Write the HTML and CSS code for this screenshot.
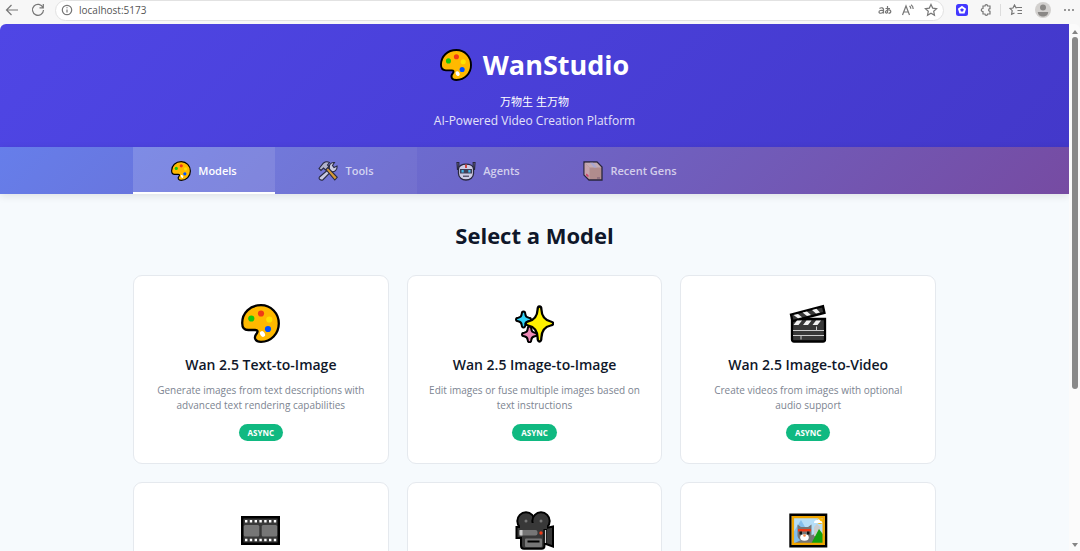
FILE: index.html
```
<!DOCTYPE html>
<html lang="en">
<head>
    <meta charset="UTF-8">
    <meta name="viewport" content="width=device-width, initial-scale=1.0">
    <title>WanStudio</title>
    <link rel="stylesheet" href="styles.css">
</head>
<body>
    <!-- shared icons -->
    <svg class="sprite" aria-hidden="true">
        <symbol id="palette" viewBox="0 0 39 39">
            <path d="M20 1.2C9 1.2 1.2 9 1.2 19c0 4.500 2 7 6 7h7c2.500 0 3 1.500 1.500 3.500-3.500 4-1.500 8.300 4.300 8.300 10 0 17.800-8 17.800-18.300S30 1.200 20 1.200Z" fill="#ffb900" stroke="#000" stroke-width="2.300"/>
            <circle cx="10.300" cy="14.500" r="3.100" fill="#16c60c"/>
            <circle cx="20" cy="9.500" r="3.100" fill="#f03a17"/>
            <circle cx="28.300" cy="15.500" r="3.100" fill="#ffe100"/>
            <circle cx="27" cy="25" r="3.100" fill="#0050ff"/>
            <ellipse cx="21.500" cy="30" rx="2.300" ry="3" transform="rotate(-35 21.500 30)" fill="#fff"/>
        </symbol>
    </svg>

    <div class="browser">
        <div class="toolbar">
            <button class="tool" aria-label="Back"><svg width="14" height="14" viewBox="0 0 14 14"><path d="M13 7H1.500M6.500 2l-5 5 5 5"/></svg></button>
            <button class="tool" aria-label="Reload"><svg width="14" height="14" viewBox="0 0 14 14"><path d="M12 4.500A5.500 5.500 0 1 0 12.500 7M12.300 1v3.800H8.500"/></svg></button>
            <div class="address">
                <svg width="12" height="12" viewBox="0 0 12 12"><circle cx="6" cy="6" r="4.700"/><path d="M6 5.500v3M6 3.300v1"/></svg>
                <input type="text" value="localhost:5173" aria-label="Address">
                <button class="tool" aria-label="Translate"><svg width="14" height="12" viewBox="0 0 14 12"><path d="M1.500 4.500c2-1.500 4-.5 4 1V9.500M5.500 6.500C3 6 1 6.500 1 8c0 2 3.500 1.500 4.500-.5M7.500 4.500h4.500M9.500 2v6.500c-1 1-2.300.5-2-.8C8 6 12.500 5 12.800 7.300c0 1.700-1.300 2-2.300 2"/></svg></button>
                <button class="tool" aria-label="Read aloud"><svg width="14" height="12" viewBox="0 0 14 12"><path d="M1.500 11 5 2l3.500 9M2.700 8h4.600M8.500 2c1 .7 1.300 1.500 1.300 2.700M10 .8c1.700 1 2.200 2.500 2.200 4.200"/></svg></button>
                <button class="tool" aria-label="Add to favorites"><svg width="14" height="14" viewBox="0 0 14 14"><path d="m7 1.500 1.700 3.600 3.900.5L9.700 8.300l.8 4L7 10.300l-3.500 2 .8-4-2.900-2.700 3.900-.5Z"/></svg></button>
            </div>
            <button class="tool" aria-label="Extension"><svg width="12" height="12" viewBox="0 0 12 12"><rect width="12" height="12" rx="2.500" class="badge-bg"/><path class="badge-mark" d="m6 3 2.900 2.100-1.100 3.400H4.200L3.100 5.100Z"/></svg></button>
            <button class="tool" aria-label="Extensions"><svg width="12" height="12" viewBox="0 0 12 12"><path d="M3 2h2c0-1.800 2.600-1.800 2.600 0H10v2.600c-1.800 0-1.800 2.800 0 2.800V10H7.600c0 1.700-2.600 1.700-2.600 0H3V7.500C.7 7.500.7 4.500 3 4.500Z"/></svg></button>
            <span class="divider"></span>
            <button class="tool" aria-label="Favorites"><svg width="14" height="12" viewBox="0 0 14 12"><path d="M8.500 3.500 7 3.800 5.500 1 4 4l-3 .4L3.200 6.600l-.6 3.700L5.500 9M8.500 3.500H13M8.500 6.500H13M8.500 9.500H13"/></svg></button>
            <button class="tool" aria-label="Profile"><svg width="16" height="16" viewBox="0 0 16 16"><circle class="avatar-bg" cx="8" cy="8" r="8"/><circle class="avatar" cx="8" cy="5.500" r="3"/><path class="avatar" d="M2.800 10h10.400c0 3-2.500 4.500-5.200 4.500S2.800 13 2.800 10Z"/></svg></button>
            <button class="tool" aria-label="More"><svg width="12" height="12" viewBox="0 0 12 12"><path class="dots" d="M2 6h0M6 6h0M10 6h0"/></svg></button>
        </div>

        <div class="viewport">
            <div class="page">
                <header class="header">
                    <h1><svg class="logo"><use href="#palette"/></svg> WanStudio</h1>
                    <p class="slogan" lang="zh">万物生 生万物</p>
                    <p class="subtitle">AI-Powered Video Creation Platform</p>
                </header>

                <nav class="nav">
                    <div class="tabs">
                        <button class="tab active">
                            <svg class="tab-icon"><use href="#palette"/></svg>
                            Models
                        </button>
                        <button class="tab hover">
                            <svg class="tab-icon" viewBox="0 0 20 20">
                                <path d="m1.500 16 10-8.500c-1-3.500 1.500-6.500 5-6l-2 3 1.500 2L19 5c.5 4-2.500 6.500-6 5.500L5 18.700c-2 1.300-5-1-3.500-2.700Z" fill="#e5e5e5" stroke="#111" stroke-width="1.100"/>
                                <path d="m7.500 8 2-2 9.800 10.300-2.500 2.700Z" fill="#f7a500" stroke="#111" stroke-width="1.100"/>
                                <path d="M1 7.500 5.500 2C7.500.5 10 .7 11.500 1.500L9.500 4l1.500 1.500L7.500 9 5.500 7 3 9.500Z" fill="#c8c8c8" stroke="#111" stroke-width="1.100"/>
                            </svg>
                            Tools
                        </button>
                        <button class="tab">
                            <svg class="tab-icon" viewBox="0 0 20 20">
                                <path d="M1 1.500h1.800v7H1.500ZM17.200 1.500H19l-.5 7h-1.300Z" fill="#aaa" stroke="#111" stroke-width="1.200"/>
                                <path d="M2.500 8c0-6.500 15-6.500 15 0v4.500c0 4-3.500 6.500-7.500 6.500s-7.500-2.500-7.500-6.500Z" fill="#eee" stroke="#111" stroke-width="1.300"/>
                                <path d="M9 3.500h2V7H9Z" fill="#f03a17"/>
                                <path d="M4 8h12v4.500H4Z" fill="#333"/>
                                <path d="M5.500 9h2.200v2.500H5.500ZM12.300 9h2.200v2.500h-2.200Z" fill="#31d2f7"/>
                                <path d="M7 14.500h6v1.500H7Z" fill="#555"/>
                            </svg>
                            Agents
                        </button>
                        <button class="tab">
                            <svg class="tab-icon" viewBox="0 0 20 20">
                                <path d="M1 1h13l5 5v13H6l-5-5Z" fill="#c69a7c" stroke="#111" stroke-width="1.300"/>
                                <path d="M1.700 1.700h12l4.600 4.800H6.500Z" fill="#e0c3ae"/>
                                <path d="M1.700 2v11.700l4.800 4.500V6.500Z" fill="#e3b9a5"/>
                                <path d="M7 1.700h3l4 4.800h-3Z" fill="#bdbdd6"/>
                                <path d="M3 12.500 5.500 14v2.500L3 14.300Z" fill="#e8364f"/>
                                <path d="M14 17h3" stroke="#755" stroke-width="1"/>
                            </svg>
                            Recent Gens
                        </button>
                    </div>
                </nav>

                <main class="container">
                    <h2>Select a Model</h2>
                    <div class="grid">
                        <article class="card">
                            <svg class="icon"><use href="#palette"/></svg>
                            <h3>Wan 2.5 Text-to-Image</h3>
                            <p>Generate images from text descriptions with advanced text rendering capabilities</p>
                            <span class="badge">ASYNC</span>
                        </article>
                        <article class="card">
                            <svg class="icon" viewBox="0 0 39 39">
                                <g stroke="#000" stroke-width="2" stroke-linejoin="round">
                                    <path d="M8.500 7.500q1.700 0 1.800 2.500.2 3.200 3.500 3.700 2.200.2 2.200 1.800t-2.200 1.800q-3.300.5-3.500 3.700-.1 2.500-1.800 2.500T6.700 21q-.2-3.200-3.500-3.700Q1 17.100 1 15.500t2.200-1.800Q6.500 13.200 6.700 10q.1-2.500 1.800-2.500Z" fill="#31d2f7"/>
                                    <path d="M14.500 22.500q1.700 0 1.800 2.500.2 3.200 3.500 3.700 2.200.2 2.200 1.800t-2.200 1.800q-3.300.5-3.500 3.700-.1 2.200-1.800 2.200T12.700 36q-.2-3.200-3.500-3.700Q7 32.100 7 30.500t2.200-1.800q3.300-.5 3.500-3.700.1-2.500 1.800-2.500Z" fill="#ef8ab8"/>
                                    <path d="M24.500 2.500c1.500 0 1.900 1 1.900 3 .3 7 3.300 10.500 9.300 12 3.500.8 3.500 3.200 0 4-6 1.300-9 5-9.300 12 0 5.300-3.800 5.300-3.800 0-.3-7-3.300-10.700-9.300-12-3.500-.8-3.500-3.200 0-4 6-1.500 9-5 9.300-12 0-2 .4-3 1.900-3Z" fill="#fff100" stroke-width="2.300"/>
                                </g>
                            </svg>
                            <h3>Wan 2.5 Image-to-Image</h3>
                            <p>Edit images or fuse multiple images based on text instructions</p>
                            <span class="badge">ASYNC</span>
                        </article>
                        <article class="card">
                            <svg class="icon" viewBox="0 0 39 39">
                                <path d="M3 15h33v20.500q0 2-2 2H5q-2 0-2-2Z" fill="#383838" stroke="#000" stroke-width="2.300"/>
                                <path d="m2 10.500 32-8.300 1.500 6.600L3.500 17Z" fill="#383838" stroke="#000" stroke-width="2.300"/>
                                <path d="m4.500 11 4.500-1 4 3.300-4 1ZM13.500 8.500l4.500-1L22 11l-4 1ZM23 6l4.500-1.200L31 8.500l-4 1Z" fill="#f2f2f2"/>
                                <path d="m8 16.500h5L9.500 21h-5ZM17.500 16.500h5L19 21h-5ZM27 16.500h5L28.500 21h-5Z" fill="#f2f2f2"/>
                                <path d="M4 26.500h31M4 31.500h31M27.500 22.500v4M12 31.500v4" stroke="#ccc" stroke-width="1" fill="none"/>
                            </svg>
                            <h3>Wan 2.5 Image-to-Video</h3>
                            <p>Create videos from images with optional audio support</p>
                            <span class="badge">ASYNC</span>
                        </article>
                        <article class="card">
                            <svg class="icon" viewBox="0 0 39 39">
                                <path d="M1.200 6.200h36.600v26.600H1.200Z" fill="#383838" stroke="#000" stroke-width="2.400"/>
                                <rect x="2.800" y="14" width="15.500" height="11.500" rx="1.500" fill="#767676"/>
                                <rect x="20.700" y="14" width="15.500" height="11.500" rx="1.500" fill="#767676"/>
                                <path d="M4 10.200h32M4 29h32" stroke="#fff" stroke-width="2.600" stroke-dasharray="2.400 2.400"/>
                            </svg>
                        </article>
                        <article class="card">
                            <svg class="icon" viewBox="0 0 39 39">
                                <path d="m31 17 7-1.500v20L31 33Z" fill="#383838" stroke="#000" stroke-width="2"/>
                                <circle cx="11" cy="10" r="8.700" fill="#383838" stroke="#000" stroke-width="2"/>
                                <circle cx="26" cy="10" r="8.700" fill="#383838" stroke="#000" stroke-width="2"/>
                                <path d="M1.500 16h28v18.500q0 3.300-3 3.300H9q-3 0-3-3.300V27H1.500Z" fill="#383838" stroke="#000" stroke-width="2"/>
                                <path d="M5 12h27v6H5Z" fill="#383838"/>
                                <path d="M30.500 19v13" stroke="#ccc" stroke-width="1.300"/>
                                <rect x="4.500" y="19" width="18" height="5.500" rx="2" fill="#767676"/>
                                <path d="M4.500 19h3v5.500h-3Z" fill="#ccc"/>
                                <circle cx="26" cy="22" r="1.700" fill="#f03a17"/>
                                <circle cx="11" cy="10" r="1.500" fill="#767676"/>
                                <circle cx="26" cy="10" r="1.500" fill="#767676"/>
                                <rect x="10" y="27.500" width="17" height="8.500" rx="1" fill="#767676"/>
                                <path d="M12.500 30.500h12" stroke="#000" stroke-width="2"/>
                            </svg>
                        </article>
                        <article class="card">
                            <svg class="icon" viewBox="0 0 39 39">
                                <path d="M1.500 3.700h35.600v31.600H1.500Z" fill="#b5def7" stroke="#000" stroke-width="2.400"/>
                                <path d="m4 22 8-13 4 7 4 17H4Z" fill="#83beec"/>
                                <path d="M4 33 20 25l6-2v10Z" fill="#767676"/>
                                <path d="M25 25V16l3-3 3 3v10Z" fill="#ccc"/>
                                <path d="M22 33 30 18l6 8v7Z" fill="#13a10e"/>
                                <circle cx="31" cy="10" r="3" fill="#ffb900"/>
                                <path d="M25 12q0-3 3-3 2-2 3.500 1 2 0 2 2Z" fill="#fff"/>
                                <path d="M8.500 13.500 12 16h7l3.500-2.500V25q-1 5-7 5t-7-5Z" fill="#767676"/>
                                <path d="M9 18h13v2.500H9Z" fill="#f03a17"/>
                                <path d="M10.500 20.500h2.500v3h-2.500ZM18 20.500h2.500v3H18Z" fill="#111"/>
                                <ellipse cx="15.500" cy="26.500" rx="4.300" ry="3.300" fill="#fff"/>
                                <circle cx="15.500" cy="24.500" r="1.300" fill="#f7894a"/>
                                <path d="M3.900 6.100h30.800v26.800H3.900Z" fill="none" stroke="#f0a500" stroke-width="2.400"/>
                            </svg>
                        </article>
                    </div>
                </main>
            </div>
            <div class="scrollbar">
                <span class="arrow"></span>
                <span class="thumb"></span>
                <span class="arrow down"></span>
            </div>
        </div>
    </div>
</body>
</html>
```

FILE: styles.css
```
* {
    box-sizing: border-box;
}
body {
    margin: 0;
    font-family: "Open Sans", "Noto Sans", "Noto Sans CJK SC", sans-serif;
    color: #0f172a;
    background: #f7f7f7;
}
h1, h2, h3, p {
    margin: 0;
}
button {
    font-family: inherit;
    border: none;
    padding: 0;
    background: none;
    cursor: pointer;
}
svg {
    display: block;
    flex-shrink: 0;
}
.sprite {
    display: none;
}

/* browser frame */
.browser {
    display: flex;
    flex-direction: column;
    height: 100vh;
    overflow: hidden;
}
.toolbar {
    display: flex;
    flex-shrink: 0;
    align-items: center;
    gap: 12px;
    height: 24px;
    padding: 0 5px 4px;
}
.toolbar svg {
    fill: none;
    stroke: #777;
    stroke-width: 1.2;
}
.address {
    display: flex;
    flex: 1;
    align-items: center;
    gap: 9px;
    height: 21px;
    margin-left: -2px;
    padding: 0 5px;
    background: #fff;
    border: 1px solid #e2e2e2;
    border-radius: 11px;
}
.address input {
    flex: 1;
    min-width: 0;
    padding: 0;
    margin-left: -3px;
    border: none;
    outline: none;
    font-family: inherit;
    font-size: 10px;
    color: #555;
    background: none;
}
.toolbar .badge-bg {
    fill: #4338ff;
    stroke: none;
}
.toolbar .badge-mark {
    stroke: #fff;
    stroke-width: 2;
}
.divider {
    width: 1px;
    height: 12px;
    margin: 0 -4px;
    background: #ddd;
}
.toolbar .avatar-bg {
    fill: #d2d0ce;
    stroke: none;
}
.toolbar .avatar {
    fill: #8a8886;
    stroke: none;
}
.toolbar .dots {
    stroke-width: 2;
    stroke-linecap: round;
}
.viewport {
    display: flex;
    flex: 1;
    min-height: 0;
    border-radius: 6px 6px 0 0;
    overflow: hidden;
    background: #fbfbfb;
}
.page {
    flex: 1;
    overflow: hidden;
    background: #f6fafd;
}
.scrollbar {
    display: flex;
    flex-direction: column;
    align-items: center;
    width: 11px;
    padding: 6px 0 4px;
}
.arrow {
    border: 3px solid transparent;
    border-top: none;
    border-bottom: 4px solid #858585;
}
.arrow.down {
    margin-top: auto;
    transform: rotate(180deg);
}
.thumb {
    width: 6px;
    height: 68%;
    margin-top: 3px;
    border-radius: 3px;
    background: #8a8a8a;
}

/* page */
.header {
    padding: 20px 20px 16px;
    text-align: center;
    color: #fff;
    background: linear-gradient(135deg, #4f46e5, #4338ca);
}
.header h1 {
    display: flex;
    justify-content: center;
    align-items: center;
    gap: 11px;
    font-size: 27px;
    line-height: 42px;
}
.logo {
    width: 32px;
    height: 32px;
}
.slogan {
    margin-top: 6px;
    font-size: 11px;
    line-height: 19px;
}
.subtitle {
    font-size: 12px;
    line-height: 20px;
    opacity: 0.85;
}
.nav {
    background: linear-gradient(135deg, #667eea, #764ba2);
    box-shadow: 0 2px 8px rgba(0, 0, 0, 0.1);
}
.tabs {
    display: flex;
    max-width: 803px;
    margin: 0 auto;
}
.tab {
    display: flex;
    justify-content: center;
    align-items: center;
    gap: 7px;
    flex: 0 1 142px;
    height: 47px;
    padding-top: 2px;
    border-bottom: 2px solid transparent;
    font-size: 11px;
    font-weight: 600;
    white-space: nowrap;
    color: rgba(255, 255, 255, 0.7);
}
.tab.hover {
    background: rgba(255, 255, 255, 0.05);
}
.tab.active {
    color: #fff;
    background: rgba(255, 255, 255, 0.15);
    border-bottom-color: #fff;
}
.tab-icon {
    width: 20px;
    height: 20px;
    opacity: 0.75;
}
.active .tab-icon {
    opacity: 1;
}
.container {
    max-width: 803px;
    margin: 0 auto;
    padding: 25px 0;
}
h2 {
    font-size: 22px;
    line-height: 32px;
    margin-bottom: 24px;
    text-align: center;
}
.grid {
    display: grid;
    grid-template-columns: repeat(3, 1fr);
    gap: 18px;
}
.card {
    display: flex;
    flex-direction: column;
    align-items: center;
    min-height: 189px;
    padding: 28px 20px 22px;
    text-align: center;
    background: #fff;
    border: 1px solid #e5e9ee;
    border-radius: 9px;
}
.icon {
    width: 39px;
    height: 39px;
    margin-bottom: 12px;
}
.card h3 {
    margin-bottom: 8px;
    font-size: 14px;
    font-weight: 600;
    line-height: 20px;
}
.card p {
    margin-bottom: 11px;
    font-size: 10px;
    line-height: 15px;
    color: #7c8491;
}
.badge {
    padding: 0 9px;
    border-radius: 9px;
    font-size: 8px;
    font-weight: 700;
    line-height: 17px;
    color: #fff;
    background: #10b981;
}
```
